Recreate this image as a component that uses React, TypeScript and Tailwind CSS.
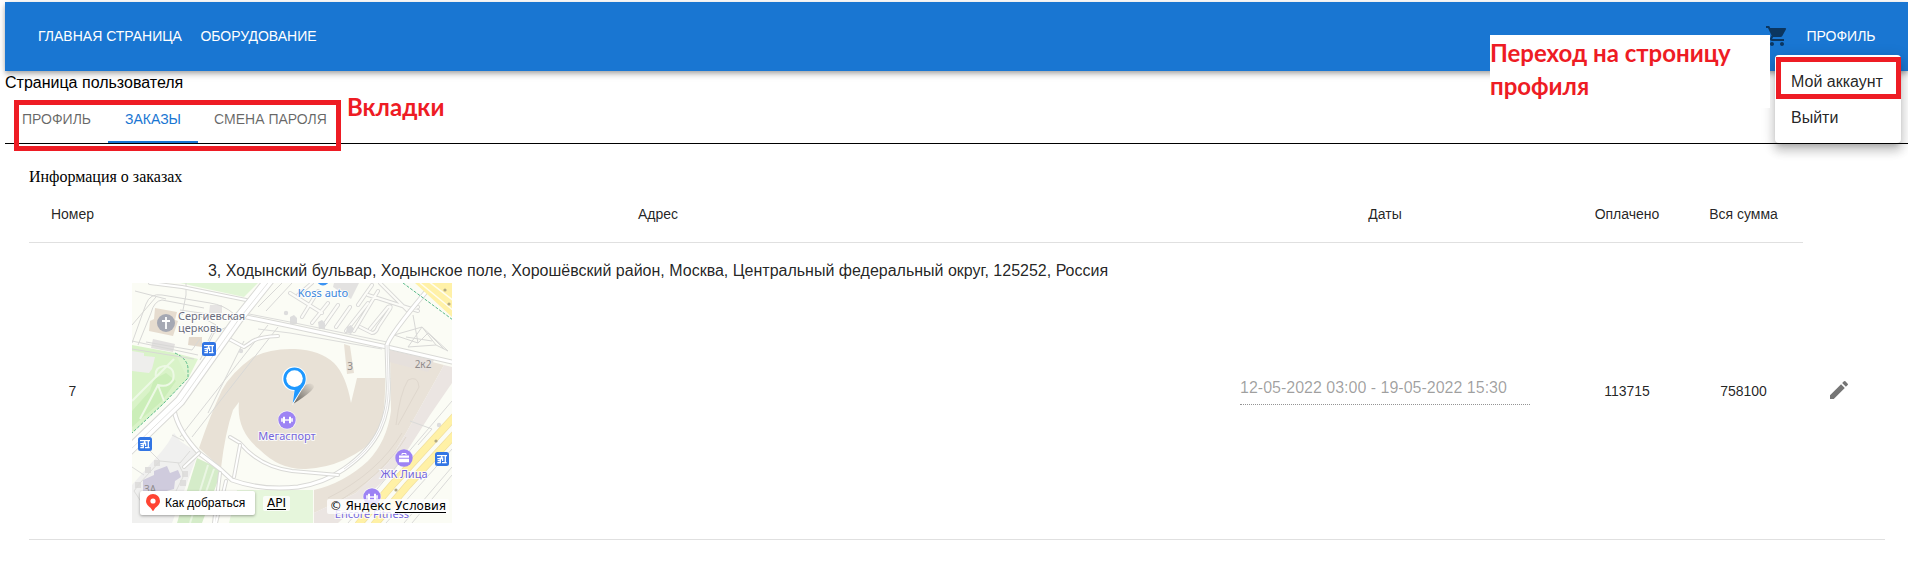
import { MdEdit, MdShoppingCart } from "react-icons/md";

function Road({ d, w = 5 }: { d: string; w?: number }) {
  return (
    <g fill="none" strokeLinejoin="round" strokeLinecap="round">
      <path d={d} stroke="#d9d9d6" strokeWidth={w} />
      <path d={d} stroke="#ffffff" strokeWidth={w - 2} />
    </g>
  );
}

function TransitStop({ x, y }: { x: number; y: number }) {
  return (
    <g transform={`translate(${x} ${y})`}>
      <rect width="14" height="14" rx="2.5" fill="#3275e4" />
      <path d="M2 3.6h10M6.7 3.6v3.6M10.3 3.6v7.2M2.3 6.6h3M5.3 5.4v5.2H2.3M2.6 8.6h2.2M7 10.6h4.6M7.6 5.6v3.4" fill="none" stroke="#fff" strokeWidth="1.3" />
    </g>
  );
}

function Dumbbell({ x, y }: { x: number; y: number }) {
  return (
    <g transform={`translate(${x} ${y})`}>
      <circle r="9.4" fill="#fff" opacity="0.7" />
      <circle r="8.7" fill="#9d83f4" />
      <path d="M-3 -3.2v6.4M3 -3.2v6.4" stroke="#fff" strokeWidth="2" />
      <path d="M-5 -1.8v3.6M5 -1.8v3.6" stroke="#fff" strokeWidth="1.6" />
      <path d="M-3 0h6" stroke="#fff" strokeWidth="1.4" />
    </g>
  );
}

function MapDrawing() {
  return (
    <svg viewBox="0 0 320 240" className="block h-full w-full" role="img" aria-label="Карта">
      <rect width="320" height="240" fill="#fbfcf5" />

      {/* parks */}
      <path d="M48 0H126L112 14Z" fill="#e1f5d6" />
      <path d="M0 62L43 70Q56 76 56 86V95L31 121L0 150Z" fill="#d9f3c8" />
      <path d="M43 70L66 76L56 96Z" fill="#def5cf" />
      <path d="M0 128L18 108L22 96L34 90L44 98L30 118L0 144Z" fill="#cbeeb8" />
      <path d="M0 118L24 94Q22 84 33 83Q44 85 41 97Q36 105 26 102L8 136M24 94L42 76M26 102L32 118" fill="none" stroke="#edf9e5" strokeWidth="2" />
      <path d="M43 70Q56 76 56 86V95L31 121L0 150" fill="none" stroke="#58b98a" strokeWidth="1" strokeDasharray="3 1.5" />
      <path d="M65 175L90 187L70 240H45Z" fill="#d5ecc9" />
      <path d="M76 182L58 240M82 186L66 232" stroke="#eaf6e3" strokeWidth="2" />
      <path d="M105 207H181V240H97Z" fill="#e6f6dc" />

      {/* yard in the lower left corner */}
      <path d="M0 202L30 168L36 160L42 150L48 158L66 170L52 208L40 240H0Z" fill="#f0f0ef" />
      <path d="M11 197L22 192V188L35 183L38 190L46 187L49 194L43 198L42 206L20 212L11 209Z" fill="#cfcbdd" />
      <g fill="#dfdedd">
        <rect x="13" y="184" width="6" height="6" />
        <rect x="22" y="177" width="6" height="6" />
        <rect x="3" y="199" width="6" height="6" />
        <rect x="50" y="188" width="6" height="6" />
        <rect x="48" y="197" width="6" height="6" />
      </g>
      <path d="M0 184L12 192M18 168L28 178L48 180L58 168M28 178L8 200L2 208L14 226M46 180L52 192L44 208M40 152L52 158" fill="none" stroke="#dcdcda" strokeWidth="1" />

      {/* buildings */}
      <path d="M23 25L45 29L43 37L46 38L41 53L17 48L18 38L22 36Z" fill="#e6dccf" />
      <path d="M78 22H90V30H77Z" fill="#e6e4e3" />
      <path d="M21 56L43 61L41 69L19 65Z" fill="#e2e0df" />
      <path d="M57 54H70V64L56 62Z" fill="#e3d9cc" />
      <path d="M0 68L12 70V73L23 74L20 86L17 90L0 88Z" fill="#eeeeec" />
      <path d="M163 66Q139 65 121 74Q99 90 90 107Q79 130 67 165L89 185Q93 150 101 127L107 119Q104 148 128 167Q148 187 174 186Q194 185 212 177Q235 166 243 154Q254 138 253 95H225L219 120Q214 92 202 80Q188 67 163 66Z" fill="#e8e1d6" />
      <path d="M212 61L218 63L222 90L215 91Z" fill="#e8e1d6" />
      <path d="M258 68L312 82L302 100L274 150L256 180L224 210L182 230V207Q212 200 236 178Q255 158 259 128Z" fill="#e9e2d8" />
      <path d="M312 82L320 84V100L298 132L262 188L230 218L206 240H182V230L224 210L256 180L274 150L302 100Z" fill="#ebe5e2" />
      <path d="M258 67L302 77L296 89L257 79Z" fill="#e6e0dc" />
      <path d="M276 97Q286 92 287 104L266 142M276 97Q268 110 264 142M270 150Q246 190 196 215M274 154Q250 194 200 222" fill="none" stroke="#dfd7cd" strokeWidth="1" />
      <path d="M202 0H227L219 16L201 4Z" fill="#e3e2e1" />

      {/* courtyards and parking lanes */}
      <g fill="none" stroke="#d8d8d6" strokeWidth="1">
        <path d="M0 60L14 21Q18 10 30 12L78 20Q92 22 102 31M6 62L19 30Q22 18 30 17L72 25M0 42L24 14M14 59L60 67L68 56M68 77L82 50L97 43L127 4" />
        <path d="M54 0V12L50 32M48 27L76 31L92 36M3 8L34 16M62 30L84 42L76 58" />
        <path d="M48 154L136 42M60 154L146 44M76 130L112 58M160 0L134 28M150 0L126 24" />
        <path d="M0 66L62 76M0 58L66 72M0 164L14 150M0 170L20 148" />
      </g>
      <g fill="none" strokeLinecap="round" strokeLinejoin="round">
        <path d="M158 10L190 30M170 34L186 8M180 40L196 20M192 42L206 22M204 44L218 24M214 48L236 20M222 48L246 8M236 12L286 28M248 0L276 28L286 24M226 22L240 2M228 44L240 50Q244 50 246 44L258 26Q260 22 256 24L238 46M166 12L180 0" stroke="#d9d9d7" strokeWidth="4" />
        <path d="M158 10L190 30M170 34L186 8M180 40L196 20M192 42L206 22M204 44L218 24M214 48L236 20M222 48L246 8M236 12L286 28M248 0L276 28L286 24M226 22L240 2M228 44L240 50Q244 50 246 44L258 26Q260 22 256 24L238 46M166 12L180 0" stroke="#fcfcf8" strokeWidth="2.2" />
      </g>
      <path d="M281 32L286 60L262 52L290 44L316 68L304 62L276 64L290 44L304 62M274 54L300 58M286 60L296 50L312 66" fill="none" stroke="#d8d8d6" strokeWidth="1" />
      <g fill="#dddddd">
        <path d="M158 34l4 -2l3 3v6l-7 1z" />
        <path d="M186 39l4 -2l3 3v6l-6 0z" />
        <path d="M215 44l4 -2l3 4l-3 5l-5 -2z" />
        <circle cx="109" cy="68" r="2.2" />
        <circle cx="154" cy="30" r="2.2" />
        <circle cx="307" cy="142" r="2.2" />
      </g>

      {/* streets */}
      <Road w={4} d="M18 0L50 4L119 18" />
      <Road w={5} d="M105 32L158 43L255 64L320 79" />
      <path d="M112 30L158 39L255 59M126 46L158 50L250 66" fill="none" stroke="#dcdcda" strokeWidth="1" />
      <Road w={4} d="M97 56L112 64L118 60Q124 54 146 53" />
      <Road w={5} d="M42 127Q46 148 67 170L88 186L100 197Q130 208 166 204Q192 200 212 186Q238 168 248 146Q258 124 256 96L255 62Q258 52 293 10" />
      <path d="M255 62L256 96Q258 124 248 146Q238 168 212 186" fill="none" stroke="#dcdcda" strokeWidth="0.8" />
      <Road w={4} d="M98 154L108 160Q128 184 160 188L206 192" />
      <Road w={4} d="M108 162L102 194" />
      <Road w={4} d="M52 184L67 170M88 190L82 240M94 198L84 240" />
      <Road w={11} d="M138 -4L106 36L48 118L-6 170" />
      <path d="M139 -4L107 36L49 118L-4 169" fill="none" stroke="#e3e3e1" strokeWidth="1" />

      {/* highways */}
      <path d="M283 0H320V34Z" fill="#fff1a8" />
      <path d="M296 -2L322 18M288 0L322 28" stroke="#fffdf0" strokeWidth="1.5" />
      <path d="M271 0L321 37" stroke="#58b98a" strokeWidth="1" strokeDasharray="3 1.5" />
      <path d="M324 132L262 200L226 242M326 148L276 202L242 242" stroke="#f0dfa0" strokeWidth="8" fill="none" />
      <path d="M324 132L262 200L226 242M326 148L276 202L242 242" stroke="#fff1a6" strokeWidth="6.6" fill="none" />
      <path d="M320 118L216 240M320 166L254 240M320 184L272 240M320 192L280 240M278 138L300 146L286 162" stroke="#dadad8" strokeWidth="1" fill="none" />
      <g fill="#b3aa82">
        <circle cx="313" cy="7" r="1.6" />
        <circle cx="317" cy="21" r="1.6" />
        <circle cx="304" cy="158" r="1.6" />
        <circle cx="264" cy="207" r="1.6" />
      </g>

      {/* places */}
      <circle cx="34" cy="40" r="9" fill="#a5a8b3" />
      <path d="M34 34v12M30 38h8" stroke="#fff" strokeWidth="1.8" />
      <TransitStop x={70} y={59} />
      <TransitStop x={6} y={154} />
      <TransitStop x={303} y={169} />
      <circle cx="191" cy="-4" r="6.5" fill="#3b93f2" />
      <Dumbbell x={155} y={137} />
      <Dumbbell x={240} y={214} />
      <circle cx="272" cy="175" r="8.7" fill="#9d83f4" />
      <path d="M267 172.5h10v2.2h-10zM267 175.7h10v3.6h-10z" fill="#fff" />
      <path d="M270 172v-1.5h4v1.5" fill="none" stroke="#fff" strokeWidth="1" />
      <g className="font-['Noto_Sans',sans-serif] text-[11px]" stroke="#fff" strokeOpacity="0.8" strokeWidth="2" paintOrder="stroke">
        <text x="46" y="37" fill="#6c6f80">Сергиевская</text>
        <text x="46" y="49" fill="#6c6f80">церковь</text>
        <text x="191" y="14" textAnchor="middle" fill="#3b87dd">Koss auto</text>
        <text x="155" y="157" textAnchor="middle" fill="#7566dc">Мегаспорт</text>
        <text x="272" y="195" textAnchor="middle" fill="#7566dc">ЖК Лица</text>
        <text x="240" y="235" textAnchor="middle" fill="#7566dc">Encore Fitness</text>
      </g>
      <g className="font-['Noto_Sans',sans-serif] text-[10px]" fill="#8f8b8b" textAnchor="middle">
        <text x="218" y="87">3</text>
        <text x="291" y="85">2к2</text>
        <text x="18" y="210">3А</text>
      </g>

      {/* order placemark */}
      <defs>
        <linearGradient id="pinShade" x1="0" y1="1" x2="1" y2="0">
          <stop offset="0" stopColor="#000" stopOpacity="0.6" />
          <stop offset="1" stopColor="#000" stopOpacity="0" />
        </linearGradient>
      </defs>
      <path d="M161 121L171 103Q180 98 182 103Q182 108 161 121Z" fill="url(#pinShade)" />
      <path d="M162.500 83.500a12 12 0 0 1 12 12c0 5 -2 8 -5 12l-9 15l1.500 -14.600a12 12 0 0 1 .5 -24.400z" fill="#fff" />
      <path d="M162.500 84.500a11.200 11.200 0 0 1 11.200 11.200c0 5 -2.500 8 -4.700 11l-8.200 13.300l1.800 -13.100a11.200 11.200 0 0 1 -.1 -22.400z" fill="#1e98ff" />
      <circle cx="162.500" cy="95.600" r="8.300" fill="#fff" />
    </svg>
  );
}

function OrderMap() {
  return (
    <div className="relative h-60 w-80 overflow-hidden font-['DejaVu_Sans',sans-serif] text-xs leading-[15px] text-black">
      <MapDrawing />
      <button
        type="button"
        className="absolute bottom-2 left-2 flex h-6 w-[115px] items-center gap-1 rounded-xs bg-white pl-[5px] font-['Liberation_Sans',sans-serif] text-xs whitespace-nowrap shadow-[0_1px_3px_rgba(0,0,0,0.35)]"
      >
        <svg viewBox="0 0 16 20" className="h-5 w-4 shrink-0" aria-hidden="true">
          <path d="M8 1a7 7 0 0 1 7 7c0 4.500 -5 6 -6.300 9.500a0.800 0.800 0 0 1 -1.400 0C6 14 1 12.500 1 8a7 7 0 0 1 7 -7z" fill="#ff4433" />
          <circle cx="8" cy="8" r="2.600" fill="#fff" />
        </svg>
        Как добраться
      </button>
      <a href="#api" className="absolute bottom-3 left-[131px] rounded-xs bg-white/80 px-1 underline underline-offset-2">
        API
      </a>
      <div className="absolute right-[3px] bottom-[9px] rounded-xs bg-white/80 px-[3px] whitespace-nowrap">
        © Яндекс{" "}
        <a href="#terms" className="underline underline-offset-2">
          Условия
        </a>
      </div>
    </div>
  );
}

const tabs = [
  { label: "ПРОФИЛЬ", width: "w-[103px]" },
  { label: "ЗАКАЗЫ", width: "w-[90px]" },
  { label: "СМЕНА ПАРОЛЯ", width: "w-[145px]" },
];

export default function App() {
  return (
    <div className="relative overflow-x-hidden bg-white pt-[2px] pb-11 pl-[5px] font-['Liberation_Sans',Arial,sans-serif] text-base text-black">
      <header className="flex h-[69px] items-center justify-between bg-[#1976d2] pr-[23px] pb-0.5 pl-6 text-sm text-white shadow-[0_2px_4px_-1px_rgba(0,0,0,0.2),0_4px_5px_0_rgba(0,0,0,0.14),0_1px_10px_0_rgba(0,0,0,0.12)]">
        <nav className="flex items-center">
          <a href="#home" className="flex h-9 w-[162px] items-center justify-center whitespace-nowrap">
            ГЛАВНАЯ СТРАНИЦА
          </a>
          <a href="#equipment" className="flex h-9 w-[135px] items-center justify-center">
            ОБОРУДОВАНИЕ
          </a>
        </nav>
        <div className="flex items-center">
          <button type="button" aria-label="Корзина" className="flex size-10 items-center justify-center text-black/54">
            <MdShoppingCart className="size-6" />
          </button>
          <button type="button" className="h-9 w-[88px]">
            ПРОФИЛЬ
          </button>
        </div>
      </header>

      <main>
        <h1 className="leading-6">Страница пользователя</h1>

        <div role="tablist" className="flex h-[49px] border-b border-black text-sm text-black/60">
          {tabs.map((tab, i) => (
            <button
              key={tab.label}
              type="button"
              role="tab"
              aria-selected={i === 1}
              className={`${tab.width} whitespace-nowrap ${i === 1 ? "border-b-2 border-[#1976d2] pt-[2px] text-[#1976d2]" : ""}`}
            >
              {tab.label}
            </button>
          ))}
        </div>

        <section className="py-6 pr-[23px] pl-6">
          <h2 className="font-['Liberation_Serif',serif] leading-[18px]">Информация о заказах</h2>
          <table className="w-full table-fixed border-collapse text-center text-sm text-black/87">
            <colgroup>
              <col className="w-[87px]" />
              <col />
              <col className="w-[370px]" />
              <col className="w-[114px]" />
              <col className="w-[119px]" />
              <col className="w-[82px]" />
            </colgroup>
            <thead>
              <tr className="h-14">
                <th className="border-b border-[#e0e0e0] font-normal">Номер</th>
                <th className="border-b border-[#e0e0e0] font-normal">Адрес</th>
                <th className="border-b border-[#e0e0e0] font-normal">Даты</th>
                <th className="border-b border-[#e0e0e0] font-normal">Оплачено</th>
                <th className="border-b border-[#e0e0e0] font-normal">Вся сумма</th>
                <td />
              </tr>
            </thead>
            <tbody>
              <tr className="border-b border-[#e0e0e0]">
                <td>7</td>
                <td className="p-4">
                  <p className="text-base leading-6">
                    3, Ходынский бульвар, Ходынское поле, Хорошёвский район, Москва, Центральный федеральный округ, 125252, Россия
                  </p>
                  <OrderMap />
                </td>
                <td className="px-10 pb-1">
                  <input
                    type="text"
                    disabled
                    aria-label="Даты"
                    defaultValue="12-05-2022 03:00 - 19-05-2022 15:30"
                    className="h-8 w-full border-b border-dotted border-black/42 bg-transparent text-base text-black/38"
                  />
                </td>
                <td>113715</td>
                <td>758100</td>
                <td className="px-4 text-left">
                  <button type="button" aria-label="Изменить" className="flex size-10 items-center justify-center text-black/54">
                    <MdEdit className="size-6" />
                  </button>
                </td>
              </tr>
            </tbody>
          </table>
        </section>
      </main>

      {/* profile menu */}
      <div
        role="menu"
        className="absolute top-[55px] right-[7px] w-[126px] rounded bg-white pt-[9px] pb-[7px] text-black/87 shadow-[0_5px_5px_-3px_rgba(0,0,0,0.2),0_8px_10px_1px_rgba(0,0,0,0.14),0_3px_14px_2px_rgba(0,0,0,0.12)]"
      >
        <button type="button" role="menuitem" className="block h-9 w-full px-4 text-left whitespace-nowrap">
          Мой аккаунт
        </button>
        <button type="button" role="menuitem" className="block h-9 w-full px-4 text-left">
          Выйти
        </button>
      </div>

      {/* notes over the page */}
      <div className="pointer-events-none absolute top-[57px] right-[7px] h-[42px] w-[125px] border-5 border-[#ee1c24]" />
      <div className="pointer-events-none absolute top-[100px] left-[14px] h-[51px] w-[327px] border-5 border-[#ee1c24]" />
      <p className="absolute top-[90px] left-[347px] font-['Lato',sans-serif] text-2xl leading-[33px] font-bold text-[#ee1c24]">Вкладки</p>
      <p className="absolute top-[35px] right-[138px] h-[73px] w-[280px] bg-white pt-px font-['Lato',sans-serif] text-2xl leading-[33px] font-bold text-[#ee1c24]">
        Переход на строницу профиля
      </p>
    </div>
  );
}
